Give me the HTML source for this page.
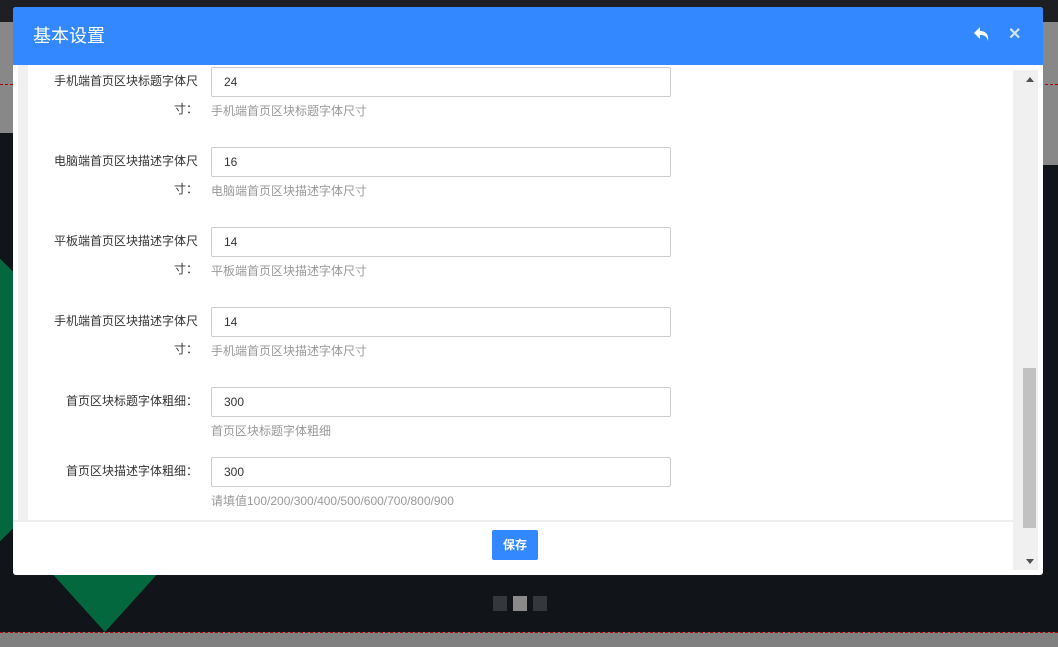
<!DOCTYPE html>
<html><head><meta charset="utf-8"><style>
*{margin:0;padding:0;box-sizing:border-box}
body{width:1058px;height:647px;overflow:hidden;background:#111418;font-family:"Liberation Sans","Noto Sans CJK SC",sans-serif;position:relative}
.abs{position:absolute}
.modal{left:13px;top:7px;width:1030px;height:568px;background:#fff;border-radius:3px;overflow:hidden}
.hd{left:0;top:0;width:1030px;height:58px;background:#3388ff;color:#fff;font-size:18px;line-height:58px;padding-left:20px}
.frame{left:5px;top:58px;width:993px;height:455px;background:#f0f0f0}
.inner{left:15px;top:58px;width:983px;height:455px;background:#fff;overflow:hidden}
.lbl{position:absolute;width:170px;text-align:right;font-size:12px;color:#333;line-height:27px}
.inp{position:absolute;left:183px;width:460px;height:30px;border:1px solid #ccc;border-radius:2px;font-size:12px;color:#333;line-height:28px;padding-left:12px}
.help{position:absolute;left:183px;font-size:12px;color:#999}
</style></head><body>
<div class="abs" style="left:0;top:0;width:1058px;height:22px;background:#1d1f23"></div>
<div class="abs" style="left:0;top:22px;width:1058px;height:111px;background:#888"></div>
<div class="abs" style="left:1043px;top:133px;width:15px;height:32px;background:#888"></div>
<div class="abs" style="left:0;top:84px;width:1058px;border-top:1px dashed #a00"></div>
<div class="abs" style="left:0;top:632px;width:1058px;height:15px;background:#808080;border-top:1px dashed #a00"></div>
<div class="abs" style="left:-100px;top:300px;width:200px;height:200px;background:#04683f;transform:rotate(45deg)"></div>
<div class="abs" style="left:49px;top:570px;width:0;height:0;border-left:56px solid transparent;border-right:56px solid transparent;border-top:62px solid #04683f"></div>
<div class="abs" style="left:493px;top:596px;width:14px;height:15px;background:#34373c"></div>
<div class="abs" style="left:513px;top:596px;width:14px;height:15px;background:#8a8a8a"></div>
<div class="abs" style="left:533px;top:596px;width:14px;height:15px;background:#34373c"></div>
<div class="abs modal">
 <div class="abs hd">基本设置</div>
 <svg class="abs" style="left:960px;top:19px" width="18" height="16" viewBox="0 0 18 16"><path d="M7 1 L1 7 L7 13 L7 9 C11 9 14 10 15 15 C16 9 13 5 7 5 Z" fill="#fff"/></svg>
 <div class="abs" style="left:995px;top:17px;color:#cfe2ff;font-size:16px;font-weight:bold">✕</div>
 <div class="abs frame"></div>
 <div class="abs inner">
  <div class="lbl" style="top:3px">手机端首页区块标题字体尺</div><div class="inp" style="top:2px;height:30px">24</div>
  <div class="lbl" style="top:31px">寸：</div><div class="help" style="top:37px">手机端首页区块标题字体尺寸</div>
  <div class="lbl" style="top:83px">电脑端首页区块描述字体尺</div><div class="inp" style="top:82px">16</div>
  <div class="lbl" style="top:111px">寸：</div><div class="help" style="top:117px">电脑端首页区块描述字体尺寸</div>
  <div class="lbl" style="top:163px">平板端首页区块描述字体尺</div><div class="inp" style="top:162px">14</div>
  <div class="lbl" style="top:191px">寸：</div><div class="help" style="top:197px">平板端首页区块描述字体尺寸</div>
  <div class="lbl" style="top:243px">手机端首页区块描述字体尺</div><div class="inp" style="top:242px">14</div>
  <div class="lbl" style="top:271px">寸：</div><div class="help" style="top:277px">手机端首页区块描述字体尺寸</div>
  <div class="lbl" style="top:323px">首页区块标题字体粗细：</div><div class="inp" style="top:322px">300</div>
  <div class="help" style="top:357px">首页区块标题字体粗细</div>
  <div class="lbl" style="top:393px">首页区块描述字体粗细：</div><div class="inp" style="top:392px">300</div>
  <div class="help" style="top:427px">请填值100/200/300/400/500/600/700/800/900</div>
 </div>
 <div class="abs" style="left:0;top:513px;width:1000px;height:2px;background:#eee"></div>
 <div class="abs" style="left:479px;top:523px;width:46px;height:30px;background:#3388ff;border-radius:2px;color:#fff;font-size:12px;font-weight:bold;text-align:center;line-height:30px">保存</div>
 <div class="abs" style="left:1000px;top:63px;width:25px;height:500px;background:#f0f0f0"></div>
 <div class="abs" style="left:1010px;top:361px;width:13px;height:160px;background:#c1c1c1"></div>
 <div class="abs" style="left:1013px;top:70px;width:0;height:0;border-left:4px solid transparent;border-right:4px solid transparent;border-bottom:5px solid #505050"></div>
 <div class="abs" style="left:1013px;top:552px;width:0;height:0;border-left:4px solid transparent;border-right:4px solid transparent;border-top:5px solid #505050"></div>
</div>
</body></html>
